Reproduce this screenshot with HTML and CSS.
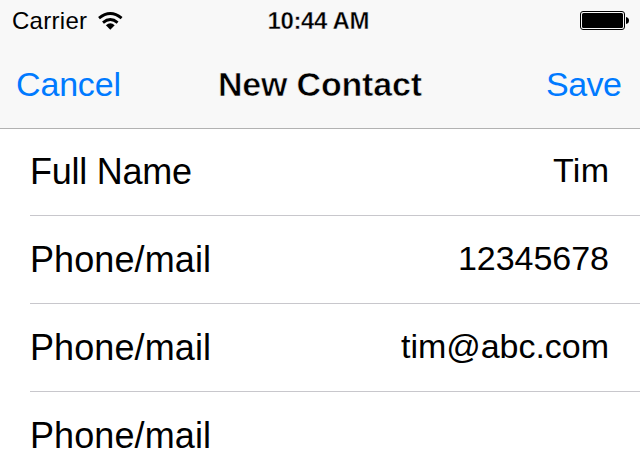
FILE: index.html
```html
<!DOCTYPE html>
<html lang="en">
<head>
<meta charset="utf-8">
<title>New Contact</title>
<link rel="stylesheet" href="styles.css">
</head>
<body>
<header class="top">
  <div class="status">
    <div class="carrier"><svg class="carrier-text" width="75" height="40"><text x="0" y="29" textLength="75">Carrier</text></svg>
      <svg class="wifi" width="25" height="18" viewBox="0 0 25 18"><g fill="none" stroke="#000" stroke-width="2.8"><path d="M1 6.2Q12.3-3.2 23.6 6.2"/><path d="M5 10.6Q12.3 4.5 19.6 10.6"/></g><path d="M7.9 13.2Q12.3 9.4 16.7 13.2L12.3 17.8Z"/></svg>
    </div>
    <svg class="time" width="102" height="40"><text x="-2.5" y="29" textLength="102">10:44 AM</text></svg>
    <svg class="battery" width="49" height="19" viewBox="0 0 49 19"><rect x=".5" y=".5" width="44" height="18" rx="2.5" fill="none" stroke="#000"/><rect x="2" y="2" width="41" height="15" rx="1.5"/><path d="M46 6Q49 6.5 49 9.5T46 13Z"/></svg>
  </div>
  <nav class="nav">
    <svg class="link" width="105" height="60"><text x="0" y="36" textLength="105">Cancel</text></svg>
    <svg class="title" width="204" height="60"><text x="0" y="36" textLength="204">New Contact</text></svg>
    <svg class="link" width="75" height="60"><text x="0" y="36" textLength="76">Save</text></svg>
  </nav>
</header>
<main class="list">
  <div class="row"><svg class="label" width="161" height="86"><text x="0" y="56" textLength="162">Full Name</text></svg><svg class="value" width="56" height="86"><text x="0" y="54" textLength="56">Tim</text></svg></div>
  <div class="row"><svg class="label" width="181" height="86"><text x="0" y="56" textLength="181">Phone/mail</text></svg><svg class="value" width="151" height="86"><text x="0" y="54" textLength="151">12345678</text></svg></div>
  <div class="row"><svg class="label" width="181" height="86"><text x="0" y="56" textLength="181">Phone/mail</text></svg><svg class="value" width="208" height="86"><text x="0" y="54" textLength="208">tim@abc.com</text></svg></div>
  <div class="row"><svg class="label" width="181" height="86"><text x="0" y="56" textLength="181">Phone/mail</text></svg></div>
</main>
</body>
</html>
```
FILE: styles.css
```css
* { box-sizing: border-box; }
body { margin: 0; height: 476px; overflow: hidden; background: #fff; color: #000; font-family: "Liberation Sans", sans-serif; }
svg { display: block; overflow: visible; }
text { fill: currentColor; }
.top { height: 129px; background: #f8f8f8; border-bottom: 1px solid #b2b2b2; }
.status { height: 40px; display: grid; grid-template-columns: 1fr 102px 1fr; padding: 0 11px 0 12px; align-items: center; }
.carrier { display: flex; gap: 11px; align-items: center; font-size: 24px; }
.wifi { margin-top: 1px; }
.time { font-size: 24px; font-weight: 700; stroke: #f8f8f8; stroke-width: .4px; }
.battery { justify-self: end; margin-top: 1px; }
.nav { height: 88px; display: grid; grid-template-columns: 1fr 204px 1fr; padding: 20px 19px 0 16px; font-size: 34px; }
.link { color: #007aff; }
.link:last-child { justify-self: end; }
.title { margin-left: 1px; font-weight: 700; stroke: #f8f8f8; stroke-width: .6px; }
.list { margin-top: -1px; padding-left: 30px; }
.row { height: 88px; display: flex; justify-content: space-between; padding-right: 31px; border-bottom: 1px solid #c8c7cc; }
.label { font-size: 36px; }
.value { font-size: 34px; }
```
